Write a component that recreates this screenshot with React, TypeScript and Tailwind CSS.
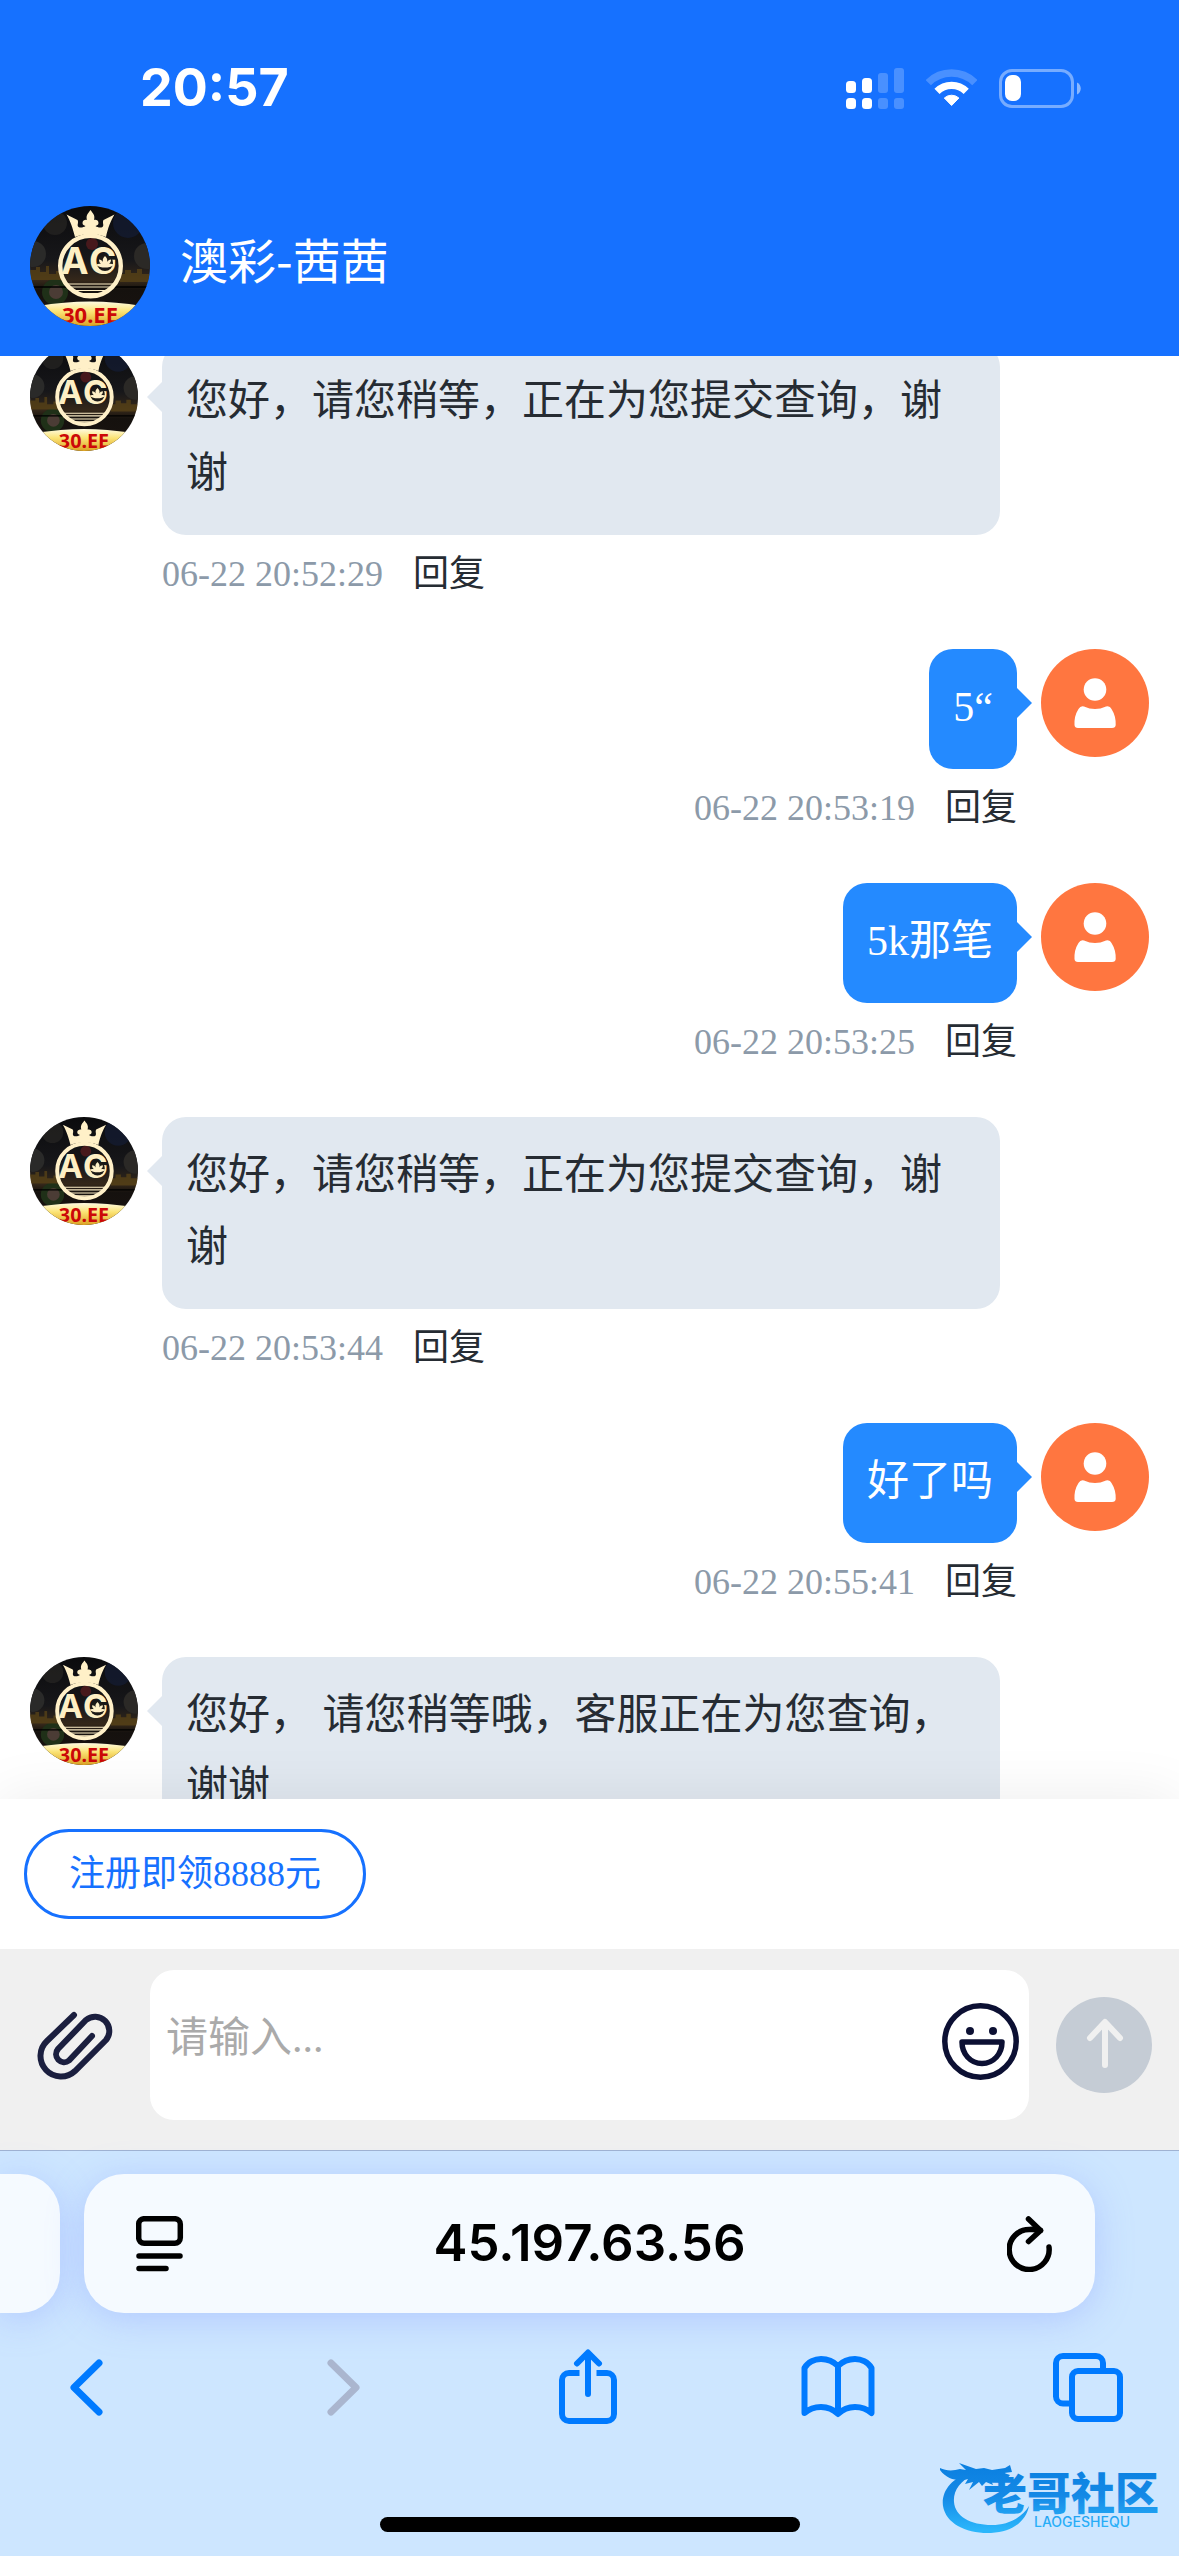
import React, { useState } from 'react';

interface Message {
    id: number;
    from: 'agent' | 'user';
    text: string;
    time: string;
}

const messages: Message[] = [
    { id: 1, from: 'agent', text: '您好，请您稍等，正在为您提交查询，谢谢', time: '06-22 20:52:29' },
    { id: 2, from: 'user', text: '5“', time: '06-22 20:53:19' },
    { id: 3, from: 'user', text: '5k那笔', time: '06-22 20:53:25' },
    { id: 4, from: 'agent', text: '您好，请您稍等，正在为您提交查询，谢谢', time: '06-22 20:53:44' },
    { id: 5, from: 'user', text: '好了吗', time: '06-22 20:55:41' },
    { id: 6, from: 'agent', text: '您好， 请您稍等哦，客服正在为您查询，谢谢', time: '06-22 20:56:02' },
];

const SignalIcon = () => (
    <svg className="w-[58px] h-[41px]" viewBox="0 0 58 41" fill="#fff">
        <rect x="0" y="13" width="10" height="12" rx="3.5" />
        <rect x="16" y="10" width="10" height="15" rx="3.5" />
        <rect x="0" y="30" width="10" height="11" rx="3.5" />
        <rect x="16" y="30" width="10" height="11" rx="3.5" />
        <g opacity="0.22">
            <rect x="32" y="5" width="10" height="20" rx="3" />
            <rect x="48" y="0" width="10" height="25" rx="3" />
            <rect x="32" y="30" width="10" height="11" rx="3" />
            <rect x="48" y="30" width="10" height="11" rx="3" />
        </g>
    </svg>
);

const WifiIcon = () => (
    <svg className="w-[51px] h-[38px]" viewBox="0 0 51 38" fill="none" stroke="#fff">
        <path d="M2.3 13.7A33 33 0 0 1 48.9 13.7" strokeWidth="7.5" opacity="0.22" />
        <path d="M11 22.4A20.7 20.7 0 0 1 40.2 22.4" strokeWidth="7.3" />
        <path d="M25.6 36.5L18.3 29A11 11 0 0 1 32.9 29Z" fill="#fff" strokeWidth="1" strokeLinejoin="round" />
    </svg>
);

const BatteryIcon = () => (
    <svg className="w-[82px] h-[39px]" viewBox="0 0 82 39">
        <rect x="1.5" y="1.5" width="72" height="36" rx="11.5" fill="none" stroke="#fff" strokeWidth="3" opacity="0.42" />
        <path d="M78 13.5c5 2 5 10 0 12z" fill="#fff" opacity="0.5" />
        <rect x="6" y="6" width="16" height="26" rx="7" fill="#fff" />
    </svg>
);

const AgentAvatar: React.FC<{ id: string; className: string }> = ({ id, className }) => (
    <svg className={`rounded-full shrink-0 ${className}`} viewBox="0 0 120 120" role="img" aria-label="客服头像">
        <defs>
            <linearGradient id={`${id}-sky`} x1="0" y1="0" x2="0" y2="1">
                <stop offset="0" stopColor="#0b0b0d" />
                <stop offset="0.45" stopColor="#17171a" />
                <stop offset="0.62" stopColor="#35281a" />
                <stop offset="0.7" stopColor="#15110e" />
                <stop offset="1" stopColor="#1a1310" />
            </linearGradient>
            <linearGradient id={`${id}-gold`} x1="0" y1="0" x2="0" y2="1">
                <stop offset="0" stopColor="#fffbe0" />
                <stop offset="0.4" stopColor="#fbe374" />
                <stop offset="1" stopColor="#d99d1e" />
            </linearGradient>
        </defs>
        <rect width="120" height="120" fill={`url(#${id}-sky)`} />
        <circle cx="25" cy="17" r="12" fill="#2b2a27" opacity="0.6" />
        <circle cx="98" cy="17" r="15" fill="#141c35" opacity="0.7" />
        <circle cx="3" cy="48" r="13" fill="#2a2a29" />
        <circle cx="117" cy="50" r="13" fill="#2b2926" />
        <circle cx="25" cy="86" r="13" fill="#1f3018" />
        <circle cx="26" cy="86" r="7" fill="#4b3c35" />
        <path d="M0 74V64h6v-3h4v5h6v-6h3v8h7v-3h6v9zM90 76v-8h5v-4h6v3h6v-4h5v5h8v8z" fill="#5d4617" opacity="0.7" />
        <path d="M0 81h120" stroke="#000" strokeWidth="1.5" />
        <circle cx="62" cy="38" r="6" fill="#47191c" />
        <circle cx="60.5" cy="60" r="30.3" fill="none" stroke="#fff0c8" strokeWidth="4.4" />
        <path
            d="M45 31C43 23 40 14 36.5 8.500l11 5.500c1.500 3-1 5 1 7 2 1 5 .5 7-1-1.500-1-3-1-3-3 0-3 3-3.500 4.500-3-1.500-5 1.500-7 3.500-10 2 3 5 5 3.500 10 2-.5 4.500 0 4.500 3 0 2-1.500 2-3 3 2 1.500 5 2 7 1 2-2-.5-4 1-7l11-5.500C81 14 77.500 23 76 31 66 27 55 27 45 31z"
            fill="#fff0c8"
        />
        <text x="31" y="68" fontFamily="Inter" fontWeight="700" fontSize="37" fill="#fdefc4">A</text>
        <text x="59" y="68" fontFamily="Inter" fontWeight="700" fontSize="37" fill="#fdefc4">G</text>
        {/* lotus sitting in the bowl of the G */}
        <circle cx="75" cy="57" r="8" fill="#1c1a17" />
        <path
            d="M75 50c2.500 2.500 2.500 4 2 6 1-1.500 2-2.500 4-2.500 0 2-.5 3-2 4.500 2-.5 3.500 0 5 1-3 2-5.500 2.500-9 2.500s-6-.5-9-2.500c1.500-1 3-1.500 5-1-1.500-1.500-2-2.500-2-4.500 2 0 3 1 4 2.500-.5-2-.5-3.500 2-6z"
            fill="#fff0c8"
        />
        <path d="M38 78h45M39 81h43M43 84.500h35M49 87.500h23" stroke="#fff0c8" strokeWidth="1.200" />
        <path d="M8 100Q60 91 112 100V121H8z" fill={`url(#${id}-gold)`} />
        <text x="60" y="117" textAnchor="middle" fontFamily="Noto Sans" fontWeight="700" fontSize="22" fill="#cc0808">30.EE</text>
    </svg>
);

const UserAvatar = () => (
    <svg className="w-[108px] h-[108px] shrink-0" viewBox="0 0 108 108" role="img" aria-label="我的头像">
        <circle cx="54" cy="54" r="54" fill="#ff7640" />
        <circle cx="54" cy="40.500" r="11.300" fill="#fff" />
        <path
            d="M37.500 60Q39.500 56.500 43 57.500 54 62.500 65 57.500 69 56.500 70.500 60 75 67 74.700 76 74.500 79 71 79H37Q33.700 79 33.500 76 33 67 37.500 60Z"
            fill="#fff"
        />
    </svg>
);

const PaperclipIcon = () => (
    <svg className="w-[78px] h-[72px]" viewBox="0 0 78 72" fill="none" stroke="#1b1f3f" strokeWidth="6" strokeLinecap="round">
        <path d="M38 6L11 32A20.500 20.500 0 0 0 39 62L70 31A14.200 14.200 0 0 0 50 11L22 40A8 8 0 0 0 33 51.500L56 27" />
    </svg>
);

const SmileIcon = () => (
    <svg className="w-[77px] h-[77px]" viewBox="0 0 77 77" fill="none" stroke="#0c1033" strokeWidth="5.5">
        <circle cx="38.500" cy="38.500" r="35.700" />
        <path d="M20 39h40c0 12-8.500 21.500-20 21.500S20 51 20 39z" strokeLinejoin="round" />
        <circle cx="28" cy="28" r="4" fill="#0c1033" stroke="none" />
        <circle cx="51" cy="28" r="4" fill="#0c1033" stroke="none" />
    </svg>
);

const Watermark = () => (
    <svg className="absolute right-3 bottom-5 w-[230px] h-[84px]" viewBox="0 0 230 84" aria-hidden="true">
        <defs>
            <linearGradient id="wm" x1="0" y1="10" x2="0" y2="78" gradientUnits="userSpaceOnUse">
                <stop offset="0" stopColor="#0a7fe0" />
                <stop offset="0.5" stopColor="#1489e6" />
                <stop offset="1" stopColor="#2bb6fb" />
            </linearGradient>
        </defs>
        <g fill="url(#wm)">
            <path d="M34 20C14 26 4 40 6 54c3 18 24 28 48 27 22-1 35-12 38-27-7 12-22 19-37 19-22 0-37-9-38-23-1-11 6-21 19-27z" />
            <path d="M3 16c6 3 13 3 20 1l6 1-7-7 17 6 8-1 8 2 13-2 5-3 2 7-8 1 6 2-3 4-7-2 4 4-8 1-5-2 2 5-7-3-4 4-3-4-10 8 4-8-8 2 3-5c-8 2-20 2-28-9z" />
            <text x="46" y="58" fontFamily="'Noto Sans CJK SC', sans-serif" fontWeight="900" fontSize="44">老哥社区</text>
            <text x="97" y="75" fontFamily="Inter, sans-serif" fontWeight="500" fontSize="14">LAOGESHEQU</text>
        </g>
    </svg>
);

const Meta: React.FC<{ time: string }> = ({ time }) => (
    <div className="flex gap-[30px] pt-3 h-[114px] text-4xl leading-[54px]">
        <time className="text-[#8c9aa9]">{time}</time>
        <button className="self-start text-[#262c33]">回复</button>
    </div>
);

const MessageRow: React.FC<{ message: Message }> = ({ message }) => {
    if (message.from === 'user') {
        return (
            <li className="flex justify-end gap-6">
                <div className="flex flex-col items-end">
                    <div className="relative px-6 pt-[22px] pb-[26px] rounded-3xl bg-[#248aff] text-white text-[42px] leading-[72px]">
                        {message.text}
                        <span className="absolute left-full top-[39px] border-y-[15px] border-l-[15px] border-y-transparent border-l-[#248aff]" />
                    </div>
                    <Meta time={message.time} />
                </div>
                <UserAvatar />
            </li>
        );
    }
    return (
        <li className="flex gap-6">
            <AgentAvatar id={`agent-${message.id}`} className="w-[108px] h-[108px]" />
            <div className="flex-1 mr-[149px]">
                <div className="relative px-6 pt-[22px] pb-[26px] rounded-3xl bg-[#e1e8f0] text-[#262c33] text-[42px] leading-[72px]">
                    {message.text}
                    <span className="absolute right-full top-[39px] border-y-[15px] border-r-[15px] border-y-transparent border-r-[#e1e8f0]" />
                </div>
                <Meta time={message.time} />
            </div>
        </li>
    );
};

const BrowserBar = () => (
    <footer className="relative shrink-0 border-t border-[#9fb2d2] bg-[#cde6ff]">
        <div className="flex gap-6 pt-[23px] pr-[84px]">
            <div className="w-[60px] h-[139px] rounded-r-[40px] bg-[#f5faff] shadow-[0_6px_36px_rgba(130,150,255,0.35)]" />
            <div className="flex flex-1 items-center h-[139px] pl-[52px] pr-[43px] rounded-[40px] bg-[#f5faff] shadow-[0_6px_36px_rgba(130,150,255,0.35)]">
                <button aria-label="页面设置">
                    <svg className="w-12 h-14" viewBox="0 0 48 56" fill="none" stroke="#000" strokeWidth="5.5" strokeLinecap="round">
                        <rect x="2.700" y="2.700" width="41.600" height="24.600" rx="5.500" />
                        <path d="M3 40h41M3 52.500h27" />
                    </svg>
                </button>
                <input
                    type="text"
                    aria-label="地址"
                    defaultValue="45.197.63.56"
                    className="flex-1 min-w-0 pr-3 text-center text-black text-[51px] font-semibold font-[Inter,sans-serif] outline-none"
                />
                <button aria-label="刷新">
                    <svg className="w-[45px] h-14" viewBox="0 0 45 56" fill="none" stroke="#000" strokeWidth="5.5" strokeLinecap="round" strokeLinejoin="round">
                        <path d="M42 31A20 20 0 1 1 22.500 13.500Q28 13 33.500 14.500" />
                        <path d="M21.500 3l12 11.500L21.500 25.500" />
                    </svg>
                </button>
            </div>
        </div>
        <nav className="flex items-center justify-between h-[148px] pl-[50px] pr-[54px] text-[#007aff]">
            <button aria-label="后退" className="flex justify-center w-[74px]">
                <svg className="w-[46px] h-[57px]" viewBox="0 0 46 57" fill="none" stroke="currentColor" strokeWidth="7" strokeLinecap="round" strokeLinejoin="round">
                    <path d="M35 4L10 28.500 35 53" />
                </svg>
            </button>
            <button aria-label="前进" disabled className="flex justify-center w-[74px] text-[#aab6cf]">
                <svg className="w-[46px] h-[57px]" viewBox="0 0 46 57" fill="none" stroke="currentColor" strokeWidth="7" strokeLinecap="round" strokeLinejoin="round">
                    <path d="M17 4l25 24.500L17 53" />
                </svg>
            </button>
            <button aria-label="分享" className="flex justify-center w-[74px]">
                <svg className="w-[58px] h-[76px]" viewBox="0 0 58 76" fill="none" stroke="currentColor" strokeWidth="6" strokeLinecap="round" strokeLinejoin="round">
                    <path strokeLinecap="butt" d="M20.500 24H10a7 7 0 0 0-7 7v34a7 7 0 0 0 7 7h38a7 7 0 0 0 7-7V31a7 7 0 0 0-7-7H37.500" />
                    <path d="M29 45V4M18 14.500L29 3.500l11 11" />
                </svg>
            </button>
            <button aria-label="书签" className="flex justify-center w-[74px]">
                <svg className="w-[74px] h-[62px]" viewBox="0 0 74 62" fill="none" stroke="currentColor" strokeWidth="6" strokeLinecap="round" strokeLinejoin="round">
                    <path d="M37 10C32 5 26 3 20 3S7 6 3.500 12V57C8 53 14 51 20 51s12 2 17 7c5-5 11-7 17-7s12 2 16.500 6V12C67 6 60 3 54 3S42 5 37 10zV57" />
                </svg>
            </button>
            <button aria-label="标签页" className="flex justify-center w-[74px]">
                <svg className="w-[70px] h-[69px]" viewBox="0 0 70 69" fill="none" stroke="currentColor" strokeWidth="6">
                    <rect x="19" y="18" width="48" height="48" rx="6" />
                    <path d="M16 50.500H10a7 7 0 0 1-7-7V10a7 7 0 0 1 7-7h33a7 7 0 0 1 7 7v5" />
                </svg>
            </button>
        </nav>
        <div className="pt-14 pb-6">
            <div className="w-[420px] h-[15px] mx-auto rounded-full bg-black" />
        </div>
        <Watermark />
    </footer>
);

const App: React.FC = () => {
    const [draft, setDraft] = useState('');

    return (
        <div lang="zh-CN" className="flex flex-col h-screen overflow-hidden bg-white font-['Liberation_Serif','Noto_Sans_CJK_SC',serif]">
            <header className="shrink-0 bg-[#1671ff] text-white font-[Inter,'Noto_Sans_CJK_SC',sans-serif]">
                <div className="flex items-center justify-between h-44 pl-[140px] pr-[98px]">
                    <span className="text-[52px] font-bold">20:57</span>
                    <div className="flex items-center gap-[22px]">
                        <SignalIcon />
                        <WifiIcon />
                        <BatteryIcon />
                    </div>
                </div>
                <div className="flex items-center gap-[30px] h-[180px] px-[30px]">
                    <AgentAvatar id="header" className="w-[120px] h-[120px]" />
                    <h1 className="pb-4 text-5xl font-['Noto_Sans_CJK_SC',sans-serif]">澳彩-茜茜</h1>
                </div>
            </header>

            <main className="flex-1 min-h-0 overflow-hidden">
                <ul className="-mt-[13px] px-[30px]">
                    {messages.map(message => (
                        <MessageRow key={message.id} message={message} />
                    ))}
                </ul>
            </main>

            <div className="relative shrink-0 px-6 py-[30px] bg-white shadow-[0_0_60px_rgba(0,0,0,0.08)]">
                <button className="block h-[90px] px-[42px] border-3 border-[#1671ff] rounded-full text-4xl text-[#1671ff]">注册即领8888元</button>
            </div>

            <form className="relative flex items-center shrink-0 pt-[21px] pb-[30px] pl-9 pr-[27px] bg-[#f0f0f0]" onSubmit={e => e.preventDefault()}>
                <button type="button" aria-label="附件">
                    <PaperclipIcon />
                </button>
                <div className="flex flex-1 items-center h-[150px] ml-9 mr-[27px] pr-[10px] rounded-3xl bg-white">
                    <textarea
                        aria-label="消息"
                        placeholder="请输入..."
                        value={draft}
                        onChange={e => setDraft(e.target.value)}
                        className="flex-1 h-[150px] py-8 px-4 text-[42px] leading-[72px] resize-none outline-none placeholder:text-[#aaaaaa]"
                    />
                    <button type="button" aria-label="表情" className="mb-2">
                        <SmileIcon />
                    </button>
                </div>
                <button type="submit" aria-label="发送" className="w-24 h-24 rounded-full bg-[#c5ccd5]">
                    <svg className="w-24 h-24" viewBox="0 0 96 96" fill="none" stroke="#f0f0f0" strokeWidth="6" strokeLinecap="round" strokeLinejoin="round">
                        <path d="M49 68V26M34 41l15-16 15 16" />
                    </svg>
                </button>
            </form>

            <BrowserBar />
        </div>
    );
};

export default App;
